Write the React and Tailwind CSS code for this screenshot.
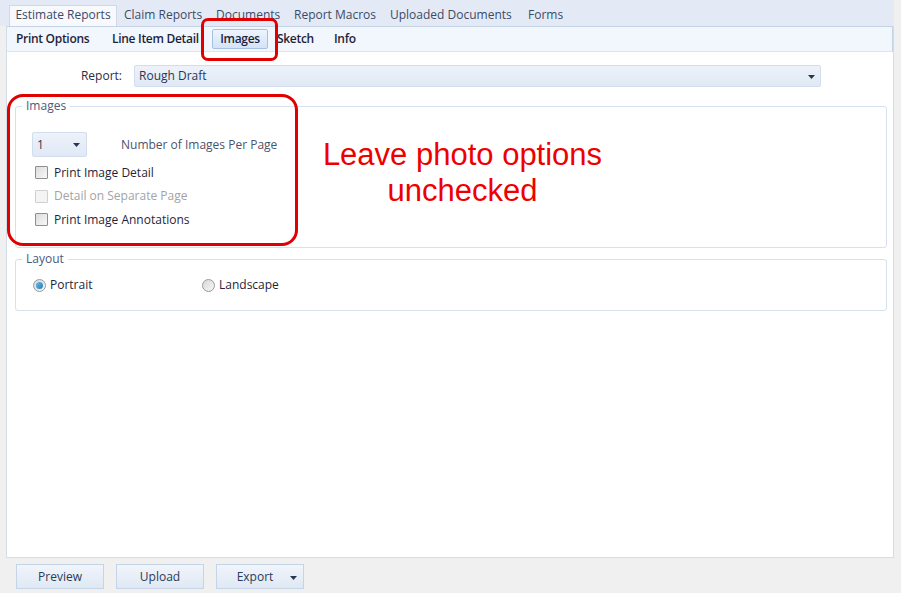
import React from "react";

const font = { fontFamily: '"Open Sans", "Noto Sans", sans-serif' };

function Checkbox({ label, disabled }) {
  return (
    <div className="flex items-center h-[23.5px]">
      <div
        className={
          "w-[13px] h-[13px] border rounded-[1px] " +
          (disabled
            ? "border-[#d0d0d0] bg-[#f4f4f4]"
            : "border-[#8e8f8f] bg-gradient-to-br from-[#dcdcdc] to-[#f8f8f8]")
        }
      />
      <span className={"ml-[6px] " + (disabled ? "text-[#a3a3a3]" : "text-[#1f1f3a]")}>{label}</span>
    </div>
  );
}

function Radio({ label, checked }) {
  return (
    <div className="flex items-center">
      <div className="w-[13px] h-[13px] rounded-full border border-[#9a9a9a] bg-gradient-to-br from-[#d8d8d8] to-[#f6f6f6] flex items-center justify-center">
        {checked && <div className="w-[7px] h-[7px] rounded-full bg-gradient-to-br from-[#69b8e6] to-[#1d7fb8]" />}
      </div>
      <span className="ml-[4px] text-[#1f1f3a]">{label}</span>
    </div>
  );
}

function Caret() {
  return (
    <svg width="7" height="4" viewBox="0 0 7 4">
      <path d="M0 0 H7 L3.5 4 Z" fill="#2a3550" />
    </svg>
  );
}

function Button({ children, caret }) {
  return (
    <div
      className={
        "relative w-[88px] h-[25px] border border-[#c5d4e7] bg-gradient-to-b from-[#f1f5fb] to-[#dfe8f4] flex items-center justify-center text-[#2b3a58] " +
        (caret ? "pr-[10px]" : "")
      }
    >
      <span>{children}</span>
      {caret && (
        <span className="absolute right-[6px] top-[11px]">
          <Caret />
        </span>
      )}
    </div>
  );
}

export default function App() {
  return (
    <div className="relative w-[901px] h-[593px] bg-[#f0f0f0] overflow-hidden text-[12px]" style={font}>
      {/* top tab strip */}
      <div className="w-[894px] h-[26px] bg-[#e3eaf5] flex items-end pl-[9px]">
        <div className="h-[21px] w-[108px] pb-[2px] bg-[#f7f9fd] border border-b-0 border-[#cfd9e8] flex items-center justify-center text-[#3b4a68]">
          Estimate Reports
        </div>
        <div className="flex h-[21px] pb-[2px] items-center text-[#3b4a68] whitespace-nowrap">
          <span className="ml-[7px] w-[92px]">Claim Reports</span>
          <span className="w-[78px]">Documents</span>
          <span className="w-[96px]">Report Macros</span>
          <span className="w-[138px]">Uploaded Documents</span>
          <span>Forms</span>
        </div>
      </div>

      {/* main panel */}
      <div className="ml-[6px] w-[888px] h-[532px] bg-white border border-t-0 border-[#d3dde9] flex flex-col">
        <div className="h-[26px] bg-[#f2f6fd] border-t border-t-[#c4d2e6] border-b border-b-[#dae4f2] border-r border-r-[#c4d2e6] flex items-center text-[#1f1f3a] font-semibold tracking-[-0.3px] whitespace-nowrap">
          <span className="ml-[9px] w-[96px]">Print Options</span>
          <span className="w-[100px]">Line Item Detail</span>
          <div className="w-[56px] h-[20px] rounded-[2px] border border-[#a7c0e0] bg-gradient-to-b from-[#edf4fd] to-[#d3e3f7] flex items-center justify-center">
            Images
          </div>
          <span className="ml-[9px] w-[57px]">Sketch</span>
          <span>Info</span>
        </div>

        {/* report row */}
        <div className="mt-[13px] flex items-center h-[22px]">
          <span className="w-[115px] text-right text-[#2d2d3d]">Report:</span>
          <div className="ml-[12px] w-[687px] h-[22px] rounded-[2px] border border-[#d2deed] bg-gradient-to-b from-[#edf2fa] to-[#e0e9f5] flex items-center justify-between px-[4px] text-[#2d3550]">
            <span>Rough Draft</span>
            <span className="mr-[1px] mt-[1px]"><Caret /></span>
          </div>
        </div>

        {/* Images group */}
        <fieldset className="mt-[12px] ml-[8px] w-[872px] h-[149px] border border-[#d6e0ee] rounded-[3px]">
          <legend className="ml-[6px] px-[4px] text-[#4b5a7e] leading-[14px]">Images</legend>
          <div className="px-[16px]">
            <div className="mt-[19px] flex items-center">
              <div className="w-[55px] h-[25px] rounded-[2px] border border-[#d2deed] bg-gradient-to-b from-[#edf2fa] to-[#e0e9f5] flex items-center justify-between px-[4px] text-[#2d3550]">
                <span>1</span>
                <span className="mr-[2px]"><Caret /></span>
              </div>
              <span className="ml-[34px] text-[#4a5470]">Number of Images Per Page</span>
            </div>
            <div className="mt-[4px] ml-[3px]">
              <Checkbox label="Print Image Detail" />
              <Checkbox label="Detail on Separate Page" disabled />
              <Checkbox label="Print Image Annotations" />
            </div>
          </div>
        </fieldset>

        {/* Layout group */}
        <fieldset className="mt-[4px] ml-[8px] w-[872px] h-[59px] border border-[#d6e0ee] rounded-[3px]">
          <legend className="ml-[6px] px-[4px] text-[#4b5a7e] leading-[14px]">Layout</legend>
          <div className="px-[17px] mt-[10px] flex items-center">
            <div className="w-[169px]">
              <Radio label="Portrait" checked />
            </div>
            <Radio label="Landscape" />
          </div>
        </fieldset>
      </div>

      {/* bottom buttons */}
      <div className="mt-[6px] ml-[16px] flex gap-[12px]">
        <Button>Preview</Button>
        <Button>Upload</Button>
        <Button caret>Export</Button>
      </div>

      {/* annotations */}
      <div className="absolute left-[201px] top-[18px] w-[77px] h-[43px] border-[3px] border-[#e00000] rounded-[7px]" />
      <div className="absolute left-[7px] top-[94px] w-[291px] h-[152px] border-[3px] border-[#e00000] rounded-[16px]" />
      <div
        className="absolute left-[300px] top-[137px] w-[325px] text-center text-[31px] leading-[36px] text-[#ee0000]"
        style={{ fontFamily: '"Liberation Sans", Arial, sans-serif' }}
      >
        Leave photo options
        <br />
        unchecked
      </div>
    </div>
  );
}
